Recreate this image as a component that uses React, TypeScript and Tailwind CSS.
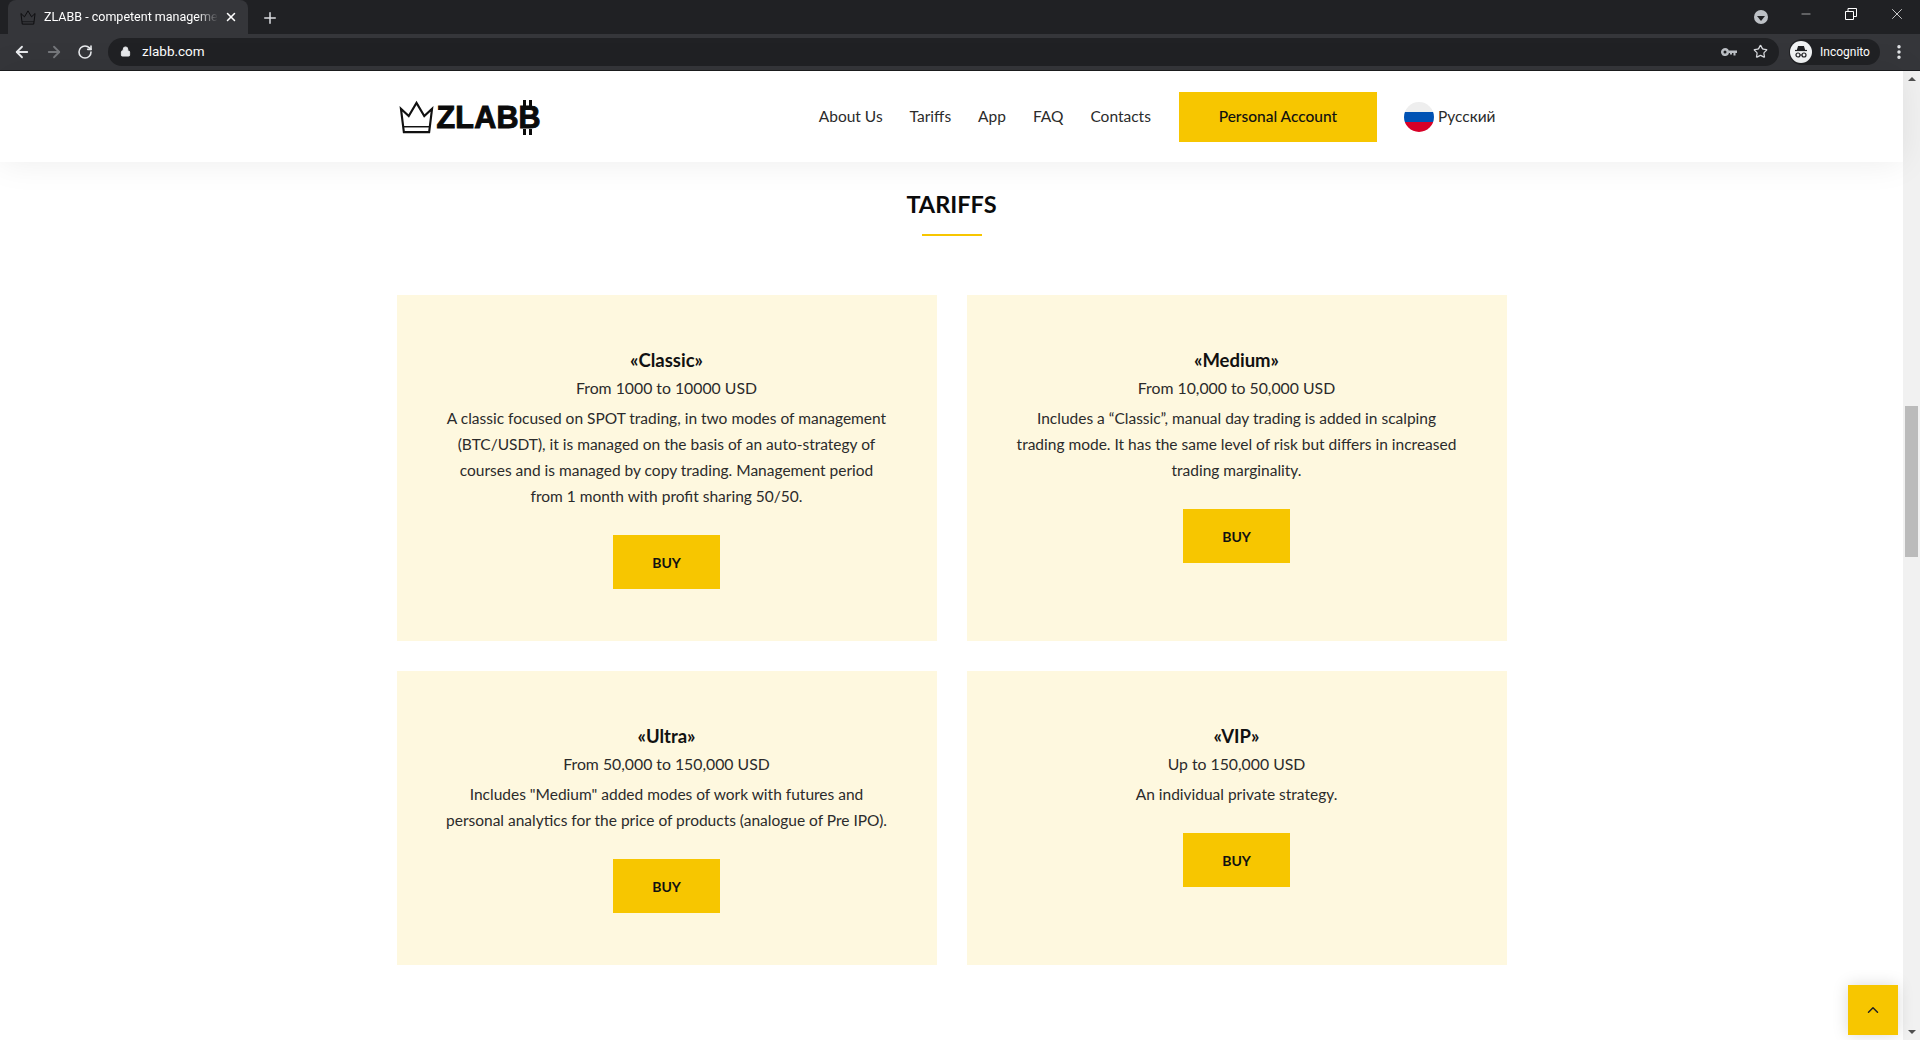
import React from 'react';
import { ArrowLeft, ArrowRight, RotateCw, Lock, Plus, X, Star, Minus, ChevronUp, EllipsisVertical } from 'lucide-react';

type Plan = { name: string; range: string; lines: string[] };

const rowOne: Plan[] = [
  {
    name: '«Classic»',
    range: 'From 1000 to 10000 USD',
    lines: [
      'A classic focused on SPOT trading, in two modes of management',
      '(BTC/USDT), it is managed on the basis of an auto-strategy of',
      'courses and is managed by copy trading. Management period',
      'from 1 month with profit sharing 50/50.',
    ],
  },
  {
    name: '«Medium»',
    range: 'From 10,000 to 50,000 USD',
    lines: [
      'Includes a “Classic”, manual day trading is added in scalping',
      'trading mode. It has the same level of risk but differs in increased',
      'trading marginality.',
    ],
  },
];

const rowTwo: Plan[] = [
  {
    name: '«Ultra»',
    range: 'From 50,000 to 150,000 USD',
    lines: [
      'Includes "Medium" added modes of work with futures and',
      'personal analytics for the price of products (analogue of Pre IPO).',
    ],
  },
  {
    name: '«VIP»',
    range: 'Up to 150,000 USD',
    lines: ['An individual private strategy.'],
  },
];

const navItems = ['About Us', 'Tariffs', 'App', 'FAQ', 'Contacts'];

const Crown = ({ className, color }: { className: string; color: string }) => (
  <svg viewBox="0 0 36 34" className={className} fill="none" stroke={color} strokeWidth="2.2" strokeLinejoin="miter">
    <path d="M5 32 L2 8 L10 15.500 L18 2 L26 15.500 L34 8 L31 32 Z" />
    <path d="M4.500 26.500 H31.500" strokeWidth="1.500" />
  </svg>
);

const ChromeBar = () => (
  <div className="shrink-0 bg-[#202124] font-['Roboto',sans-serif] text-white">
    <div className="flex h-[34px] items-end pl-2">
      <div className="flex h-[34px] w-[240px] items-center rounded-t-lg bg-[#35363a] pl-3 pr-[10px]">
        <Crown className="h-[15px] w-[16px]" color="#0c0c0e" />
        <span className="ml-[8px] w-[174px] overflow-hidden whitespace-nowrap text-[12.500px] [mask-image:linear-gradient(to_right,black_88%,transparent)]">
          ZLABB - competent management
        </span>
        <X className="ml-auto h-[14px] w-[14px]" strokeWidth={2.6} />
      </div>
      <Plus className="ml-[13px] mb-[7px] h-[18px] w-[18px] text-[#dadce0]" strokeWidth={2} />
      <div className="ml-auto flex h-[34px] items-center">
        <div className="mr-[29px] flex h-[14px] w-[14px] items-center justify-center rounded-full bg-[#bdc1c6]">
          <div className="mt-[2px] h-0 w-0 border-x-[4px] border-t-[5px] border-x-transparent border-t-[#202124]" />
        </div>
        <div className="mb-[6px] flex items-center pr-[14px]">
          <Minus className="h-[14px] w-[18px]" strokeWidth={1} />
          <svg viewBox="0 0 12 12" className="ml-[30px] h-[12px] w-[12px]" fill="none" stroke="#fff" strokeWidth="1">
            <path d="M.5 3.500h8v8h-8zM3 3.500V.5h8.500v8H8.500" />
          </svg>
          <X className="ml-[31px] h-[18px] w-[18px]" strokeWidth={1} />
        </div>
      </div>
    </div>
    <div className="flex h-[37px] items-center border-b border-[#1b1c1f] bg-[#35363a] pb-[1px]">
      <ArrowLeft className="ml-[13px] h-[18px] w-[18px] text-[#e8eaed]" strokeWidth={2.4} />
      <ArrowRight className="ml-[14px] h-[18px] w-[18px] text-[#75777b]" strokeWidth={2.4} />
      <RotateCw className="ml-[14px] h-[16px] w-[16px] text-[#e8eaed]" strokeWidth={2.4} />
      <div className="ml-[15px] flex h-[28px] flex-1 items-center rounded-full bg-[#202124] pl-[12px] pr-[11px]">
        <Lock className="h-[11px] w-[11px] fill-[#e8eaed] text-[#e8eaed]" strokeWidth={2} />
        <span className="ml-[11px] text-[13.500px]">zlabb.com</span>
        <svg viewBox="0 0 16 8" className="ml-auto h-[8px] w-[16px]" fill="#bdc1c6">
          <path d="M4 0a4 4 0 1 1-3.800 5.200A4 4 0 0 1 4 0zm0 2.500a1.500 1.500 0 1 0 0 3 1.500 1.500 0 0 0 0-3z" fillRule="evenodd" />
          <path d="M7.500 2.500H16V5h-1.500v2.500H12.500V5H11v1.500H9V5H7.500z" />
        </svg>
        <Star className="ml-[16px] h-[15px] w-[15px] text-[#dadce0]" strokeWidth={2} />
      </div>
      <div className="ml-[10px] flex h-[26px] w-[91px] items-center rounded-full bg-[#202124] pl-[1px]">
        <div className="flex h-[22px] w-[22px] items-center justify-center rounded-full bg-[#f1f3f4]">
          <svg viewBox="0 0 16 16" className="h-[16px] w-[16px]" fill="none" stroke="#202124" strokeWidth="1.200">
            <path d="M4.500 6 L5.500 2.500 H10.500 L11.500 6 Z" fill="#202124" />
            <path d="M2 6.500 H14" />
            <circle cx="5" cy="11" r="2" />
            <circle cx="11" cy="11" r="2" />
            <path d="M7 11 H9" />
          </svg>
        </div>
        <span className="ml-[8px] text-[12px]">Incognito</span>
      </div>
      <EllipsisVertical className="mr-[12px] ml-[10px] h-[18px] w-[18px] text-[#e8eaed]" strokeWidth={2.600} />
    </div>
  </div>
);

const Logo = () => (
  <div className="ml-[2px] mt-[2px] flex items-center">
    <Crown className="h-[35px] w-[35px]" color="#111" />
    <div className="relative ml-[3px] font-['Liberation_Sans',sans-serif] text-[30.500px] font-bold leading-none tracking-[0.2px] text-[#0b0b0b] [-webkit-text-stroke:1px_#0b0b0b]">
      ZLABB
      {/* ticks that turn the last B into the bitcoin sign */}
      <span className="absolute right-[9px] -top-[2px] h-[6px] w-[3px] bg-[#0b0b0b]" />
      <span className="absolute right-[15px] -top-[2px] h-[6px] w-[3px] bg-[#0b0b0b]" />
      <span className="absolute right-[9px] -bottom-[2px] h-[6px] w-[3px] bg-[#0b0b0b]" />
      <span className="absolute right-[15px] -bottom-[2px] h-[6px] w-[3px] bg-[#0b0b0b]" />
    </div>
  </div>
);

const Flag = () => (
  <div className="flex h-[30px] w-[30px] flex-col overflow-hidden rounded-full">
    <div className="h-[10px] bg-[#eeeeee]" />
    <div className="h-[10px] bg-[#0052b4]" />
    <div className="h-[10px] bg-[#d80027]" />
  </div>
);

const Header = () => (
  <header className="relative z-10 h-[91px] shrink-0 bg-white shadow-[0_0_35px_rgba(0,0,0,0.08)]">
    <div className="mx-auto flex h-full w-[1110px] items-center">
      <Logo />
      <nav className="ml-auto flex items-center text-[15.500px] text-[#2b2b2b]">
        {navItems.map(item => (
          <a key={item} className="mr-[27px]">
            {item}
          </a>
        ))}
        <a className="ml-[1px] flex h-[50px] w-[198px] items-center justify-center bg-[#f7c600] font-medium text-[#111]">
          Personal Account
        </a>
        <div className="ml-[27px] mr-[11px] flex items-center">
          <Flag />
          <span className="ml-[4px]">Русский</span>
        </div>
      </nav>
    </div>
  </header>
);

const PlanCard = ({ plan }: { plan: Plan }) => (
  <div className="flex w-[540px] flex-col items-center bg-[#fef8df] pt-[50px] pb-[52px] text-center text-[#2b2b2b]">
    <h3 className="text-[18.500px] font-bold leading-[30px] text-[#111]">{plan.name}</h3>
    <p className="text-[15.800px] leading-[26px]">{plan.range}</p>
    <div className="mt-[4px] text-[15.500px] leading-[26px]">
      {plan.lines.map(line => (
        <p key={line}>{line}</p>
      ))}
    </div>
    <a className="mt-[26px] flex h-[54px] w-[107px] items-center justify-center bg-[#f7c600] text-[14px] font-bold text-[#111]">
      BUY
    </a>
  </div>
);

const Scrollbar = () => (
  <div className="flex w-[17px] shrink-0 flex-col items-center bg-[#f1f1f1]">
    <div className="mt-[6px] h-0 w-0 border-x-[4px] border-b-[4px] border-x-transparent border-b-[#505050]" />
    <div className="mt-[325px] h-[151px] w-[13px] bg-[#bbbbbb]" />
    <div className="mt-auto mb-[6px] h-0 w-0 border-x-[4px] border-t-[4px] border-x-transparent border-t-[#505050]" />
  </div>
);

const App: React.FC = () => {
  return (
    <div className="flex h-[1040px] flex-col overflow-hidden bg-white font-['Lato',sans-serif]">
      <ChromeBar />
      <div className="relative flex min-h-0 flex-1">
        <div className="flex min-w-0 flex-1 flex-col">
          <Header />
          <main className="flex-1">
            <div className="mt-[26px] text-center">
              <h2 className="text-[23.500px] font-bold leading-[32px] text-[#0b0b0b]">TARIFFS</h2>
              <div className="mx-auto mt-[14px] h-[2px] w-[60px] bg-[#f7c600]" />
            </div>
            <div className="mx-auto mt-[59px] flex w-[1110px] flex-col gap-[30px]">
              <div className="flex items-stretch gap-[30px]">
                {rowOne.map(plan => (
                  <PlanCard key={plan.name} plan={plan} />
                ))}
              </div>
              <div className="flex items-stretch gap-[30px]">
                {rowTwo.map(plan => (
                  <PlanCard key={plan.name} plan={plan} />
                ))}
              </div>
            </div>
          </main>
        </div>
        <Scrollbar />
        <button className="absolute right-[22px] bottom-[5px] flex h-[50px] w-[50px] items-center justify-center bg-[#f7c600] shadow-[0_0_15px_rgba(0,0,0,0.15)]">
          <ChevronUp className="h-[18px] w-[18px] text-[#222]" strokeWidth={2} />
        </button>
      </div>
    </div>
  );
};

export default App;
